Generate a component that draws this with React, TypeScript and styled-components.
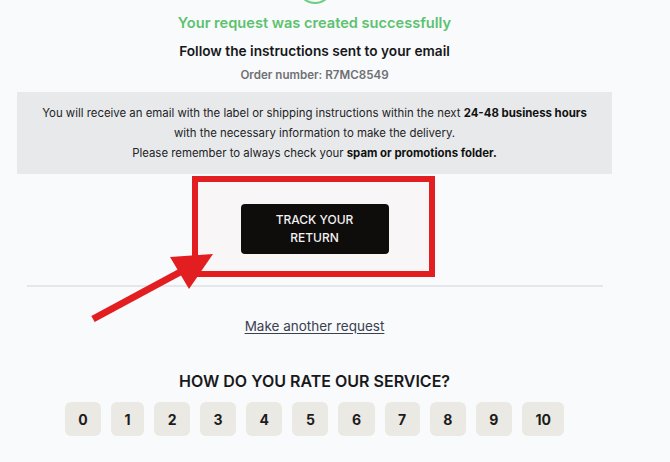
import React from "react";
import styled, { createGlobalStyle } from "styled-components";

const Global = createGlobalStyle`
  html, body { margin: 0; padding: 0; background: #f9fafb; }
  body { font-family: Inter, "Noto Sans", Arial, sans-serif; -webkit-font-smoothing: antialiased; }
  * { box-sizing: border-box; }
`;

const Page = styled.div`
  position: relative;
  width: 670px;
  height: 462px;
  overflow: hidden;
  background: #f9fafb;
`;

const Content = styled.main`
  margin-left: 17px;
  width: 595px;
  display: flex;
  flex-direction: column;
  align-items: center;
`;

const SuccessIcon = styled.div`
  width: 36px;
  height: 36px;
  margin-top: -32px;
  border-radius: 50%;
  border: 2.5px solid #6bcf82;
`;

const Title = styled.h1`
  margin: 9px 0 0;
  font-size: 14.6px;
  line-height: 20px;
  font-weight: 600;
  color: #5cc26f;
`;

const Subtitle = styled.h2`
  margin: 8px 0 0;
  font-size: 13.7px;
  line-height: 20px;
  font-weight: 600;
  color: #16171a;
`;

const OrderNumber = styled.p`
  margin: 6px 0 0;
  font-size: 11.6px;
  line-height: 16px;
  font-weight: 600;
  color: #6f7074;
`;

const InfoBox = styled.div`
  margin-top: 9px;
  width: 100%;
  background: #e8e9eb;
  padding: 11px 0;
  text-align: center;
  font-size: 11.4px;
  line-height: 20px;
  color: #222326;
  & b { font-weight: 700; color: #111; }
`;

const ButtonSection = styled.section`
  position: relative;
  width: 100%;
  display: flex;
  justify-content: center;
  padding: 30px 0 31px;
`;

const Highlight = styled.div`
  position: absolute;
  left: 175px;
  top: 2px;
  width: 243px;
  height: 101px;
  border: 6.5px solid #e31e21;
  background: #f8f6f6;
`;

const TrackButton = styled.button`
  position: relative;
  z-index: 1;
  width: 148px;
  height: 50px;
  border: none;
  border-radius: 4px;
  background: #0f0d0c;
  color: #f2f2f2;
  font-family: inherit;
  font-size: 12px;
  line-height: 18px;
  font-weight: 500;
  text-transform: uppercase;
  padding: 0 28px;
`;

const Divider = styled.hr`
  width: 576px;
  margin: 0 0 0 1px;
  border: none;
  height: 2px;
  background: #e6e7ea;
`;

const LinkText = styled.a`
  margin-top: 30px;
  font-size: 13.5px;
  line-height: 18px;
  color: #3a4150;
  text-decoration: underline;
  text-underline-offset: 2px;
`;

const RateHeading = styled.h3`
  margin: 36px 0 0;
  font-size: 16px;
  line-height: 20px;
  font-weight: 600;
  color: #18191b;
`;

const RateRow = styled.div`
  margin-top: 11px;
  display: flex;
  gap: 10px;
`;

const RateButton = styled.button`
  height: 34px;
  min-width: 33px;
  padding: 0 13.5px;
  border: none;
  border-radius: 6px;
  background: #ebe9e3;
  color: #1c1c1c;
  font-family: inherit;
  font-size: 14px;
  font-weight: 700;
`;

const Overlay = styled.svg`
  position: absolute;
  left: 0;
  top: 0;
  pointer-events: none;
  z-index: 2;
`;

export default function App() {
  return (
    <Page>
      <Global />
      <Content>
        <SuccessIcon />
        <Title>Your request was created successfully</Title>
        <Subtitle>Follow the instructions sent to your email</Subtitle>
        <OrderNumber>Order number: R7MC8549</OrderNumber>
        <InfoBox>
          You will receive an email with the label or shipping instructions within the next <b>24-48 business hours</b>
          <br />
          with the necessary information to make the delivery.
          <br />
          Please remember to always check your <b>spam or promotions folder.</b>
        </InfoBox>
        <ButtonSection>
          <Highlight />
          <TrackButton>Track your return</TrackButton>
        </ButtonSection>
        <Divider />
        <LinkText href="#">Make another request</LinkText>
        <RateHeading>HOW DO YOU RATE OUR SERVICE?</RateHeading>
        <RateRow>
          {Array.from({ length: 11 }, (_, i) => (
            <RateButton key={i}>{i}</RateButton>
          ))}
        </RateRow>
      </Content>
      <Overlay width="670" height="462" viewBox="0 0 670 462">
        <line x1="93" y1="319" x2="184" y2="270" stroke="#e31e21" strokeWidth="7" />
        <polygon points="170,257 213,254 189,289" fill="#e31e21" />
      </Overlay>
    </Page>
  );
}
